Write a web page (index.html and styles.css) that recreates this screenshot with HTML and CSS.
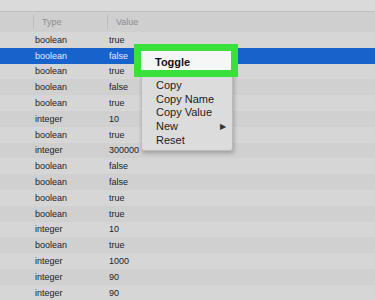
FILE: index.html
```html
<!DOCTYPE html>
<html>
<head>
    <title>Preferences</title>
    <link rel="stylesheet" href="styles.css">
</head>
<body>
    <div class="window">
        <div class="toolbar"></div>
        <div class="table-head">
            <div class="col-key"></div>
            <div class="col-type">Type</div>
            <div class="col-value">Value</div>
        </div>
        <div class="rows">
            <div class="row"><div class="col-key"></div><div class="col-type">boolean</div><div class="col-value">true</div></div>
            <div class="row selected"><div class="col-key"></div><div class="col-type">boolean</div><div class="col-value">false</div></div>
            <div class="row"><div class="col-key"></div><div class="col-type">boolean</div><div class="col-value">true</div></div>
            <div class="row"><div class="col-key"></div><div class="col-type">boolean</div><div class="col-value">false</div></div>
            <div class="row"><div class="col-key"></div><div class="col-type">boolean</div><div class="col-value">true</div></div>
            <div class="row"><div class="col-key"></div><div class="col-type">integer</div><div class="col-value">10</div></div>
            <div class="row"><div class="col-key"></div><div class="col-type">boolean</div><div class="col-value">true</div></div>
            <div class="row"><div class="col-key"></div><div class="col-type">integer</div><div class="col-value">300000</div></div>
            <div class="row"><div class="col-key"></div><div class="col-type">boolean</div><div class="col-value">false</div></div>
            <div class="row"><div class="col-key"></div><div class="col-type">boolean</div><div class="col-value">false</div></div>
            <div class="row"><div class="col-key"></div><div class="col-type">boolean</div><div class="col-value">true</div></div>
            <div class="row"><div class="col-key"></div><div class="col-type">boolean</div><div class="col-value">true</div></div>
            <div class="row"><div class="col-key"></div><div class="col-type">integer</div><div class="col-value">10</div></div>
            <div class="row"><div class="col-key"></div><div class="col-type">boolean</div><div class="col-value">true</div></div>
            <div class="row"><div class="col-key"></div><div class="col-type">integer</div><div class="col-value">1000</div></div>
            <div class="row"><div class="col-key"></div><div class="col-type">integer</div><div class="col-value">90</div></div>
            <div class="row"><div class="col-key"></div><div class="col-type">integer</div><div class="col-value">90</div></div>
        </div>

        <!-- context menu -->
        <div class="context-menu">
            <div class="menu-item">Copy</div>
            <div class="menu-item">Copy Name</div>
            <div class="menu-item">Copy Value</div>
            <div class="menu-item">New <span class="arrow">&#9654;</span></div>
            <div class="menu-item">Reset</div>
        </div>
        <div class="highlight">Toggle</div>
    </div>
</body>
</html>
```

FILE: styles.css
```css
body {
    margin: 0;
    font-family: 'Liberation Sans', Arial, sans-serif;
    background: #d4d4d5;
}
.window {
    position: relative;
    width: 375px;
    height: 300px;
    overflow: hidden;
}
.toolbar {
    height: 11px;
    background: #dadadb;
    border-bottom: 1px solid #bdbdbe;
}
.table-head {
    display: flex;
    height: 20px;
    background: #cfcfd0;
    font-size: 9px;
    color: #8c8c8c;
    align-items: center;
}
.col-key {
    width: 33px;
    flex-shrink: 0;
}
.col-type {
    width: 74px;
    flex-shrink: 0;
    padding-left: 2px;
    box-sizing: border-box;
}
.col-value {
    flex: 1;
    padding-left: 2px;
}
.table-head .col-type,
.table-head .col-value {
    border-left: 1px solid #bcbcbd;
    padding-left: 8px;
    height: 14px;
    line-height: 14px;
}
.row {
    display: flex;
    height: 15.8px;
    align-items: center;
    font-size: 9px;
    color: #222;
    background: #d6d6d7;
}
.row:nth-child(even) {
    background: #d0d0d1;
}
.row.selected {
    background: #1862cc;
    color: #e6eefb;
}
.context-menu {
    position: absolute;
    left: 141px;
    top: 47px;
    width: 90px;
    padding: 30px 0 3px;
    background: #dcdcdd;
    border: 1px solid #bcbcbd;
    border-radius: 3px;
    box-shadow: 1px 2px 4px rgba(0,0,0,0.25);
    font-size: 11px;
    color: #1c1c1c;
}
.menu-item {
    display: flex;
    height: 13.8px;
    align-items: center;
    padding-left: 14px;
    padding-right: 6px;
}
.arrow {
    margin-left: auto;
    font-size: 8px;
    color: #333;
}
.highlight {
    position: absolute;
    left: 134px;
    top: 44px;
    width: 76px;
    height: 17px;
    padding: 2px 0 0 14px;
    border: 7px solid #3ae13d;
    background: #f6f6f6;
    font-size: 11px;
    font-weight: bold;
    line-height: 19px;
    color: #111;
}
```
